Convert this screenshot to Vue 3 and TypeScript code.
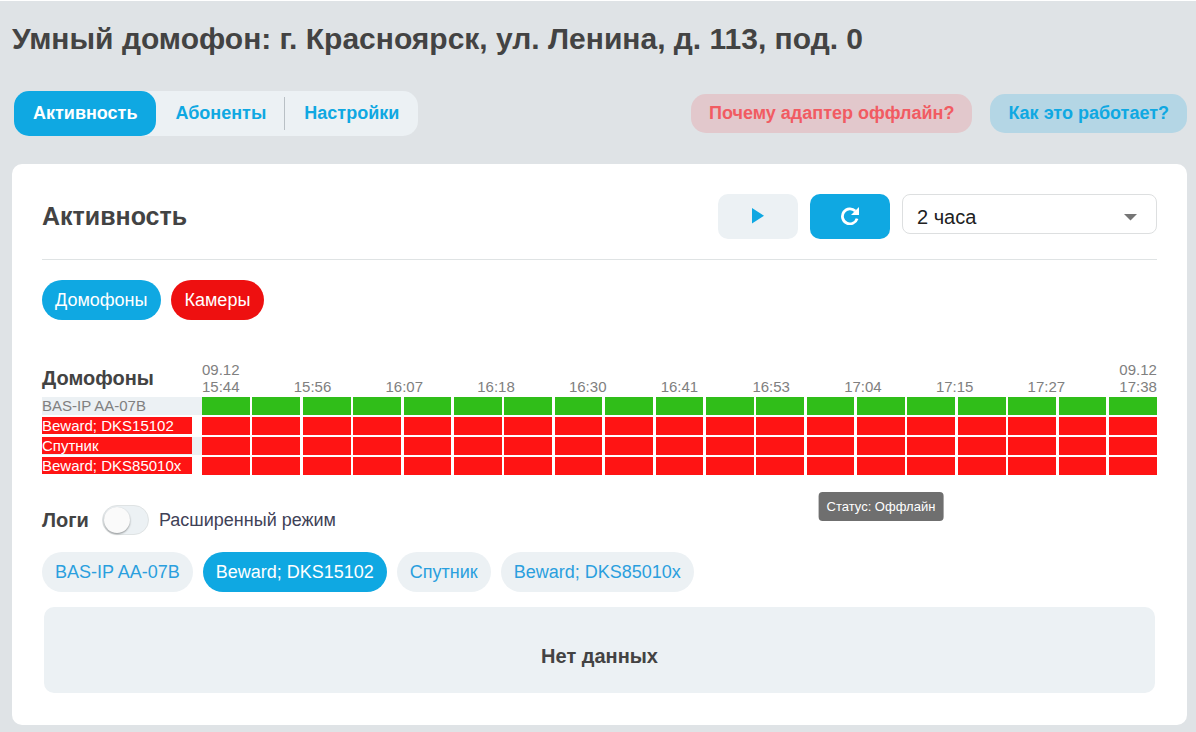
<script setup lang="ts">
import { ref } from 'vue'

interface Device {
  name: string
  online: boolean
}

const tabs: string[] = ['Активность', 'Абоненты', 'Настройки']
const activeTab = ref<string>('Активность')

const devices: Device[] = [
  { name: 'BAS-IP AA-07B', online: true },
  { name: 'Beward; DKS15102', online: false },
  { name: 'Спутник', online: false },
  { name: 'Beward; DKS85010x', online: false },
]

const ticks: { date?: string; time: string }[] = [
  { date: '09.12', time: '15:44' },
  { time: '15:56' },
  { time: '16:07' },
  { time: '16:18' },
  { time: '16:30' },
  { time: '16:41' },
  { time: '16:53' },
  { time: '17:04' },
  { time: '17:15' },
  { time: '17:27' },
  { date: '09.12', time: '17:38' },
]

const segmentCount = 19
const hovered = ref<{ row: number; segment: number }>({ row: 3, segment: 13 })

const period = ref<string>('2')
const extended = ref<boolean>(false)
const logDevice = ref<string>('Beward; DKS15102')
</script>

<template>
  <div class="page">
    <h1 class="title">Умный домофон: г. Красноярск, ул. Ленина, д. 113, под. 0</h1>

    <div class="bar">
      <nav class="tabs">
        <button
          v-for="tab in tabs"
          :key="tab"
          type="button"
          class="tab"
          :class="{ active: tab === activeTab }"
          @click="activeTab = tab"
        >{{ tab }}</button>
      </nav>
      <div class="help">
        <button type="button" class="help-button danger">Почему адаптер оффлайн?</button>
        <button type="button" class="help-button info">Как это работает?</button>
      </div>
    </div>

    <main class="card">
      <header class="card-head">
        <h2 class="card-title">Активность</h2>
        <div class="controls">
          <button type="button" class="icon-button light" aria-label="Воспроизвести">
            <svg width="14" height="16" viewBox="0 0 14 16"><path d="M1 0L13 7.8L1 15.5Z" fill="currentColor" /></svg>
          </button>
          <button type="button" class="icon-button primary" aria-label="Обновить">
            <svg width="18" height="18" viewBox="0 0 18 18">
              <path d="M14.3 4.1A7.5 7.5 0 1 0 16.1 11.6" fill="none" stroke="currentColor" stroke-width="2.8" />
              <path d="M18 0V8H10Z" fill="currentColor" />
            </svg>
          </button>
          <div class="select-wrap">
            <select v-model="period" class="select" aria-label="Период">
              <option value="2">2 часа</option>
            </select>
            <svg class="caret" width="14" height="7" viewBox="0 0 14 7"><path d="M0 0H13L6.5 6.5Z" fill="#757575" /></svg>
          </div>
        </div>
      </header>

      <div class="chips">
        <button type="button" class="chip primary">Домофоны</button>
        <button type="button" class="chip red">Камеры</button>
      </div>

      <table class="timeline">
        <thead>
          <tr>
            <th class="group" scope="col">Домофоны</th>
            <th class="axis-cell" scope="col">
              <div class="axis">
                <span v-for="tick in ticks" :key="tick.time" class="tick">
                  <span v-if="tick.date">{{ tick.date }}</span>
                  <span>{{ tick.time }}</span>
                </span>
              </div>
            </th>
          </tr>
        </thead>
        <tbody>
          <tr v-for="(device, row) in devices" :key="device.name" class="device">
            <th class="device-cell" scope="row">
              <span class="device-name" :class="{ offline: !device.online }">{{ device.name }}</span>
            </th>
            <td class="segments-cell">
              <div class="segments">
                <span
                  v-for="(n, segment) in segmentCount"
                  :key="n"
                  class="segment"
                  :class="{ offline: !device.online }"
                >
                  <span
                    v-if="hovered.row === row && hovered.segment === segment"
                    class="tooltip"
                    role="tooltip"
                  >Статус: Оффлайн</span>
                </span>
              </div>
            </td>
          </tr>
        </tbody>
      </table>

      <div class="logs-head">
        <h3 class="logs-title">Логи</h3>
        <input id="extended" v-model="extended" class="switch" type="checkbox" />
        <label for="extended" class="switch-label">Расширенный режим</label>
      </div>

      <div class="chips log-chips">
        <button
          v-for="device in devices"
          :key="device.name"
          type="button"
          class="chip"
          :class="{ primary: device.name === logDevice }"
          @click="logDevice = device.name"
        >{{ device.name }}</button>
      </div>

      <div class="empty">Нет данных</div>
    </main>
  </div>
</template>

<style>
body {
  background: #dfe3e6;
}
</style>

<style scoped>
.page {
  box-sizing: border-box;
  padding: 0 9px 7px 12px;
  border-top: 1px solid #ffffff;
  background: #dfe3e6;
  color: #434343;
  font-family: "Liberation Sans", Arial, sans-serif;
}

button {
  border: 0;
  font-family: inherit;
  cursor: pointer;
  white-space: nowrap;
}

svg {
  display: block;
}

.title {
  margin: 0;
  padding-top: 20px;
  font-size: 30px;
  line-height: 36px;
}

.bar {
  display: flex;
  justify-content: space-between;
  align-items: center;
  margin: 34px 0 28px 2px;
}

.tabs {
  display: flex;
  height: 45px;
  border-radius: 15px;
  background: #ecf1f4;
}

.tab {
  position: relative;
  padding: 0 19px;
  border-radius: 15px;
  background: transparent;
  color: #0fa8e2;
  font-size: 18px;
  font-weight: 700;
}

.tab.active {
  background: #0fa8e2;
  color: #ffffff;
}

.tab + .tab:not(:last-child)::after {
  content: "";
  position: absolute;
  top: 6px;
  right: 0;
  width: 1px;
  height: 33px;
  background: #b9c0c5;
}

.help {
  display: flex;
  gap: 18px;
}

.help-button {
  height: 39px;
  padding: 0 18px;
  border-radius: 15px;
  font-size: 18px;
  font-weight: 700;
}

.danger {
  background: #e2c8cc;
  color: #f15b62;
}

.info {
  background: #b4d6e5;
  color: #0fa8e2;
}

.card {
  padding: 30px 30px 32px;
  border-radius: 10px;
  background: #ffffff;
}

.card-head {
  display: flex;
  justify-content: space-between;
  align-items: flex-start;
  padding-bottom: 20px;
  border-bottom: 1px solid #dfe3e4;
}

.card-title {
  margin: 0;
  font-size: 25px;
  line-height: 45px;
}

.controls {
  display: flex;
  gap: 12px;
}

.icon-button {
  display: flex;
  justify-content: center;
  align-items: center;
  width: 80px;
  height: 45px;
  padding: 0 0 2px;
  border-radius: 10px;
}

.icon-button.light {
  background: #ecf1f4;
  color: #0fa8e2;
}

.primary {
  background: #0fa8e2;
  color: #ffffff;
}

.select-wrap {
  position: relative;
}

.select {
  width: 255px;
  height: 40px;
  padding: 5px 40px 0 14px;
  border: 1px solid #dddfe0;
  border-radius: 8px;
  appearance: none;
  background: #ffffff;
  color: #212121;
  font-family: inherit;
  font-size: 20px;
}

.caret {
  position: absolute;
  top: 20px;
  right: 19px;
  pointer-events: none;
}

.chips {
  display: flex;
  gap: 10px;
  margin-top: 20px;
}

.chip {
  height: 40px;
  padding: 0 13px;
  border-radius: 20px;
  background: #ecf1f4;
  color: #2a9fde;
  font-size: 18px;
}

.chip.primary {
  background: #0fa8e2;
  color: #ffffff;
}

.chip.red {
  padding: 0 14px;
  background: #ee1010;
  color: #ffffff;
}

.timeline {
  width: 100%;
  margin-top: 39px;
  border-collapse: collapse;
  table-layout: fixed;
}

.timeline th,
.timeline td {
  padding: 0;
  text-align: left;
}

.timeline .group {
  width: 160px;
  padding-bottom: 3px;
  font-size: 20px;
  line-height: 32px;
  vertical-align: bottom;
}

.axis {
  display: flex;
  justify-content: space-between;
  align-items: flex-end;
  height: 36px;
  padding-bottom: 2px;
  color: #808080;
  font-size: 15px;
  font-weight: 400;
  line-height: 17px;
}

.tick {
  display: flex;
  flex-direction: column;
}

.device-cell {
  height: 20px;
  font-size: 15px;
  font-weight: 400;
  line-height: 17px;
  vertical-align: top;
}

.device:nth-child(odd) .device-cell {
  background: linear-gradient(#ecf1f4 18px, transparent 18px);
}

.device-name {
  display: block;
  margin-right: 10px;
  color: #808080;
}

.device-name.offline {
  background: #ff1414;
  color: #ffffff;
}

.segments-cell {
  vertical-align: top;
}

.segments {
  display: grid;
  grid-template-columns: repeat(19, 5%);
  justify-content: space-between;
}

.segment {
  position: relative;
  height: 18px;
  background: #30be19;
}

.segment.offline {
  background: #ff1414;
}

.tooltip {
  position: absolute;
  top: 35px;
  left: 50%;
  padding: 0 8px;
  border-radius: 4px;
  background: #6f6f6f;
  color: #ffffff;
  font-size: 13px;
  line-height: 29px;
  white-space: nowrap;
  transform: translateX(-50%);
}

.logs-head {
  display: flex;
  align-items: center;
  margin-top: 28px;
}

.logs-title {
  margin: 0;
  font-size: 20px;
  line-height: 30px;
}

.switch {
  display: flex;
  align-items: center;
  width: 47px;
  height: 30px;
  margin: 0 10px 0 13px;
  padding: 0 1px;
  border: 1px solid #dfe3e4;
  border-radius: 15px;
  appearance: none;
  background: #ecf1f4;
  box-sizing: border-box;
}

.switch::before {
  content: "";
  width: 26px;
  height: 26px;
  border-radius: 50%;
  background: #fafafa;
  box-shadow: 0 1px 2px rgba(0, 0, 0, 0.4);
}

.switch:checked {
  justify-content: flex-end;
  background: #0fa8e2;
}

.switch-label {
  color: #3f4257;
  font-size: 18px;
}

.log-chips {
  margin-top: 17px;
}

.empty {
  margin: 15px 2px 0;
  padding: 37px 0 25px;
  border-radius: 10px;
  background: #ecf1f4;
  font-size: 20px;
  font-weight: 700;
  line-height: 24px;
  text-align: center;
}
</style>
